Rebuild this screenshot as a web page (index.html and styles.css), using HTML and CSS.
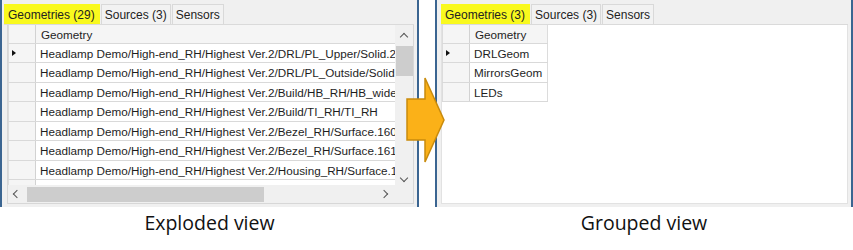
FILE: index.html
```html
<!DOCTYPE html>
<html lang="en">
<head>
    <meta charset="UTF-8">
    <meta name="viewport" content="width=device-width, initial-scale=1.0">
    <title>Exploded and grouped view</title>
    <link rel="stylesheet" href="styles.css">
</head>
<body>
    <div class="figure">
        <!-- Exploded view -->
        <div class="pane pane-left">
            <div class="window">
                <div class="tabs">
                    <span class="tab active">Geometries (29)</span>
                    <span class="tab">Sources (3)</span>
                    <span class="tab">Sensors</span>
                </div>
                <div class="grid-box scrolled">
                    <div class="viewport">
                        <div class="row head">
                            <div class="rh"></div>
                            <div class="cell wide">Geometry</div>
                        </div>
                        <div class="row">
                            <div class="rh"><span class="marker"></span></div>
                            <div class="cell wide">Headlamp Demo/High-end_RH/Highest Ver.2/DRL/PL_Upper/Solid.2</div>
                        </div>
                        <div class="row">
                            <div class="rh"></div>
                            <div class="cell wide">Headlamp Demo/High-end_RH/Highest Ver.2/DRL/PL_Outside/Solid.1</div>
                        </div>
                        <div class="row">
                            <div class="rh"></div>
                            <div class="cell wide">Headlamp Demo/High-end_RH/Highest Ver.2/Build/HB_RH/HB_wide</div>
                        </div>
                        <div class="row">
                            <div class="rh"></div>
                            <div class="cell wide">Headlamp Demo/High-end_RH/Highest Ver.2/Build/TI_RH/TI_RH</div>
                        </div>
                        <div class="row">
                            <div class="rh"></div>
                            <div class="cell wide">Headlamp Demo/High-end_RH/Highest Ver.2/Bezel_RH/Surface.160</div>
                        </div>
                        <div class="row">
                            <div class="rh"></div>
                            <div class="cell wide">Headlamp Demo/High-end_RH/Highest Ver.2/Bezel_RH/Surface.161</div>
                        </div>
                        <div class="row">
                            <div class="rh"></div>
                            <div class="cell wide">Headlamp Demo/High-end_RH/Highest Ver.2/Housing_RH/Surface.12</div>
                        </div>
                        <div class="row">
                            <div class="rh"></div>
                            <div class="cell wide">Headlamp Demo/High-end_RH/Highest Ver.2/Housing_RH/Surface.13</div>
                        </div>
                    </div>
                    <div class="vscroll">
                        <span class="chev up"></span>
                        <span class="vthumb"></span>
                        <span class="chev down"></span>
                    </div>
                    <div class="hscroll">
                        <span class="chev left"></span>
                        <span class="hthumb"></span>
                        <span class="chev right"></span>
                    </div>
                    <div class="corner"></div>
                </div>
            </div>
            <p class="caption">Exploded view</p>
        </div>

        <!-- Grouped view -->
        <div class="pane pane-right">
            <div class="window">
                <div class="tabs">
                    <span class="tab active">Geometries (3)</span>
                    <span class="tab">Sources (3)</span>
                    <span class="tab">Sensors</span>
                </div>
                <div class="grid-box plain">
                    <div class="small-grid">
                        <div class="row head">
                            <div class="rh"></div>
                            <div class="cell narrow">Geometry</div>
                        </div>
                        <div class="row">
                            <div class="rh"><span class="marker"></span></div>
                            <div class="cell narrow">DRLGeom</div>
                        </div>
                        <div class="row">
                            <div class="rh"></div>
                            <div class="cell narrow">MirrorsGeom</div>
                        </div>
                        <div class="row">
                            <div class="rh"></div>
                            <div class="cell narrow">LEDs</div>
                        </div>
                    </div>
                </div>
            </div>
            <p class="caption">Grouped view</p>
        </div>

        <svg class="arrow" width="42" height="88" viewBox="0 0 42 88">
            <polygon points="2,23 20,23 20,2 39,44 20,86 20,64 2,64"
                     fill="#fbb118" stroke="#c98b0c" stroke-width="1.5" stroke-linejoin="miter"/>
        </svg>
    </div>
</body>
</html>
```

FILE: styles.css
```css
/* Page */
body {
    margin: 0;
    background: #fff;
    font-family: 'Liberation Sans', Arial, sans-serif;
    color: #1e1e1e;
}

.figure {
    position: relative;
    display: flex;
    gap: 16px;
    width: 853px;
    height: 250px;
}

.pane-left {
    width: 419px;
}

.pane-right {
    width: 418px;
}

/* Window frame */
.window {
    box-sizing: border-box;
    height: 207px;
    padding: 4px 3px 4px 5px;
    background: #f0f0f0;
    border-left: 2px solid #3b6591;
    border-right: 2px solid #3b6591;
}

.pane-right .window {
    padding-left: 4px;
}

/* Tabs */
.tabs {
    display: flex;
    height: 20px;
    border-bottom: 1px solid #dadada;
}

.pane-left .tabs {
    margin-left: -3px;
}

.tab {
    box-sizing: border-box;
    height: 20px;
    padding: 3px 3px 0 3px;
    margin-right: 1px;
    font-size: 12px;
    line-height: 15px;
    color: #222;
    background: #f2f2f2;
    border: 1px solid #d9d9d9;
    border-bottom: none;
}

.tab.active {
    background: #f9f91e;
    border-color: #f9f91e;
    padding-left: 3px;
    padding-right: 4px;
}

/* Grid box */
.grid-box {
    box-sizing: border-box;
    height: 179px;
    border: 1px solid #d7d7d7;
    border-top: none;
}

.grid-box.scrolled {
    display: grid;
    grid-template-columns: 1fr 18px;
    grid-template-rows: 1fr 18px;
    background: #f0f0f0;
}

.grid-box.plain {
    background: #fff;
    border-color: #e2e2e2;
}

.viewport {
    overflow: hidden;
    background: #fff;
}

.row {
    display: flex;
    box-sizing: border-box;
    height: 19.5px;
    border-bottom: 1px solid #d9d9d9;
}

.row.head {
    height: 18.5px;
}

.rh {
    flex: 0 0 26px;
    display: flex;
    align-items: center;
    background: #f5f5f5;
    border-left: 1px solid #dcdcdc;
    border-right: 1px solid #d2d2d2;
}

.cell {
    box-sizing: border-box;
    padding: 3px 0 0 4px;
    font-size: 11.7px;
    line-height: 14px;
    white-space: nowrap;
    overflow: hidden;
    border-right: 1px solid #dcdcdc;
}

.row.head .cell {
    background: #f5f5f5;
    padding-left: 5px;
}

.cell.wide {
    flex: 0 0 380px;
}

.cell.narrow {
    flex: 0 0 78px;
}

.small-grid {
    display: inline-block;
}

.marker {
    width: 0;
    height: 0;
    margin-left: 3px;
    border-top: 3px solid transparent;
    border-bottom: 3px solid transparent;
    border-left: 4px solid #111;
}

/* Scrollbars */
.vscroll {
    display: flex;
    flex-direction: column;
    align-items: center;
    background: #f0f0f0;
}

.vthumb {
    width: 17px;
    height: 30px;
    margin-top: 6px;
    background: #cdcdcd;
}

.hscroll {
    display: flex;
    align-items: center;
    background: #f0f0f0;
}

.hthumb {
    width: 237px;
    height: 15px;
    margin-left: 7px;
    background: #cdcdcd;
}

.corner {
    background: #f0f0f0;
}

.chev {
    width: 5px;
    height: 5px;
    border-left: 1.5px solid #555;
    border-top: 1.5px solid #555;
}

.chev.up {
    margin-top: 9px;
    transform: rotate(45deg);
}

.chev.down {
    margin-top: auto;
    margin-bottom: 4px;
    transform: rotate(225deg);
}

.chev.left {
    margin-left: 6px;
    transform: rotate(-45deg);
}

.chev.right {
    margin-left: auto;
    margin-right: 8px;
    transform: rotate(135deg);
}

/* Captions */
.caption {
    margin: 2px 0 0;
    text-align: center;
    font-family: 'Open Sans', 'Noto Sans', sans-serif;
    font-size: 19.5px;
    color: #111;
}

/* Arrow lies over both windows */
.arrow {
    position: absolute;
    left: 405px;
    top: 76px;
}
```
